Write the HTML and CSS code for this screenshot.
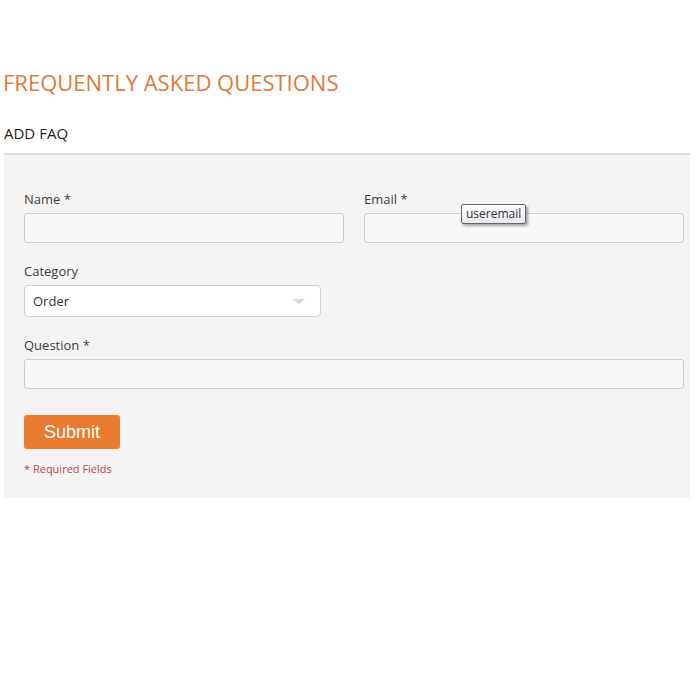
FILE: index.html
```html
<!DOCTYPE html>
<html lang="en">
<head>
    <meta charset="UTF-8">
    <meta name="viewport" content="width=device-width, initial-scale=1.0">
    <title>FAQ</title>
    <link rel="stylesheet" href="styles.css">
</head>
<body>

<div class="page">
    <h1 class="page-title">FREQUENTLY ASKED QUESTIONS</h1>
    <h2 class="section-title">ADD FAQ</h2>

    <form class="faq-form">
        <div class="row two">
            <div class="field">
                <label>Name *</label>
                <input type="text" class="input">
            </div>
            <div class="field email-field">
                <label>Email *</label>
                <input type="text" class="input">
                <span class="tooltip">useremail</span>
            </div>
        </div>

        <div class="field">
            <label>Category</label>
            <div class="select">
                <span>Order</span>
                <span class="arrow"></span>
            </div>
        </div>

        <div class="field">
            <label>Question *</label>
            <input type="text" class="input">
        </div>

        <button type="button" class="btn-submit">Submit</button>
        <p class="required">* Required Fields</p>
    </form>
</div>

</body>
</html>
```

FILE: styles.css
```css
body {
    font-family: "Open Sans", Arial, sans-serif;
    margin: 0;
    padding: 0;
    background-color: #fff;
    color: #333;
}
.page {
    width: 686px;
    margin-left: 4px;
    padding-top: 69px;
}
.page-title {
    font-size: 22px;
    font-weight: 400;
    color: #e0793a;
    margin: 0 0 0 -1px;
    line-height: 26px;
}
.section-title {
    font-size: 15px;
    font-weight: 400;
    color: #222;
    margin: 28px 0 0 0;
    line-height: 20px;
    padding-bottom: 10px;
    border-bottom: 2px solid #dcdcdc;
}
.faq-form {
    background-color: #f4f4f4;
    padding: 33px 6px 22px 20px;
    display: flex;
    flex-direction: column;
}
.row.two {
    display: grid;
    grid-template-columns: 1fr 1fr;
    gap: 20px;
}
.field {
    display: flex;
    flex-direction: column;
    margin-bottom: 17px;
}
.email-field {
    position: relative;
}
.field label {
    font-size: 13px;
    color: #3e3e3e;
    line-height: 18px;
    padding-top: 2px;
    margin-bottom: 5px;
}
.input {
    height: 30px;
    box-sizing: border-box;
    border: 1px solid #cfcfcf;
    border-radius: 3px;
    background-color: #f8f8f8;
    margin: 0;
}
.select {
    width: 297px;
    height: 32px;
    box-sizing: border-box;
    border: 1px solid #cfcfcf;
    border-radius: 4px;
    background-color: #fff;
    display: flex;
    align-items: center;
    justify-content: space-between;
    padding: 0 15px 0 8px;
    font-size: 13px;
    color: #333;
}
.arrow {
    width: 0;
    height: 0;
    border-left: 6px solid transparent;
    border-right: 6px solid transparent;
    border-top: 5px solid #d6d6d6;
}
.tooltip {
    position: absolute;
    left: 97px;
    top: 16px;
    font-size: 12px;
    color: #333;
    padding: 1px 4px 2px;
    border: 1px solid #666;
    border-radius: 2px;
    background: linear-gradient(#fff, #e8e8ef);
    box-shadow: 2px 2px 3px rgba(0, 0, 0, 0.35);
    line-height: 15px;
}
.btn-submit {
    align-self: flex-start;
    width: 96px;
    height: 34px;
    margin-top: 9px;
    border: none;
    border-radius: 3px;
    background-color: #e87b30;
    color: #fff;
    font-family: "Liberation Sans", Arial, sans-serif;
    font-size: 18px;
    padding: 0;
}
.required {
    font-size: 11px;
    color: #c0464b;
    margin: 12px 0 0 0;
    line-height: 15px;
}
```
